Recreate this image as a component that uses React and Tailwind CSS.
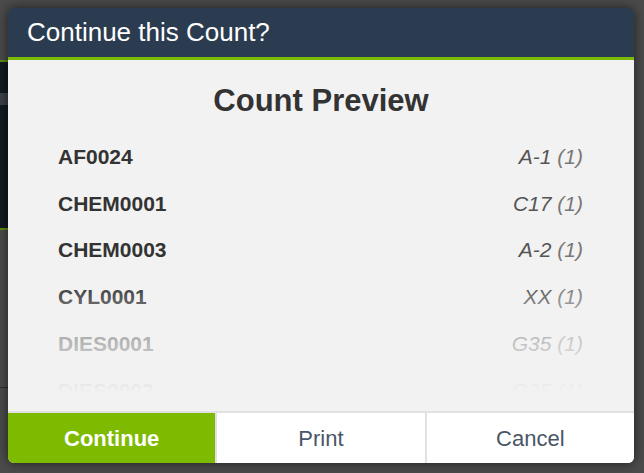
const rows = [
  { sku: 'AF0024', loc: 'A-1', qty: 1 },
  { sku: 'CHEM0001', loc: 'C17', qty: 1 },
  { sku: 'CHEM0003', loc: 'A-2', qty: 1 },
  { sku: 'CYL0001', loc: 'XX', qty: 1 },
  { sku: 'DIES0001', loc: 'G35', qty: 1 },
  { sku: 'DIES0002', loc: 'G35', qty: 1 },
];

export default function App() {
  return (
    <div className="relative h-[473px] w-[644px] overflow-hidden bg-[#4b4b4b] font-['Liberation_Sans',Arial,sans-serif]">
      {/* page behind the overlay */}
      <div className="mt-[60px] flex h-[170px] w-[300px] flex-col border-y-2 border-[#5f8f12] bg-[#121a23]">
        <div className="mt-[31px] h-[12px] bg-[#3c4249]" />
      </div>
      <div className="mt-[157px] h-px w-[300px] bg-[#2e2e2e]" />

      <div className="absolute left-[8px] top-[8px] flex h-[455px] w-[626px] flex-col overflow-hidden rounded-[6px] shadow-[0_0_12px_rgba(0,0,0,0.6)]">
        <div className="flex h-[52px] items-center border-b-[3px] border-[#7cba0a] bg-[#2c3c50] pl-[19px] text-[26px] text-white">
          Continue this Count?
        </div>

        <div className="flex flex-1 flex-col bg-[#f2f2f2] pt-[23px]">
          <h2 className="h-[36px] text-center text-[31px] font-bold leading-[36px] text-[#333]">Count Preview</h2>
          <div className="relative mt-[14.5px] h-[259px] overflow-hidden">
            {rows.map((r) => (
              <div key={r.sku} className="flex h-[46.7px] items-center justify-between pl-[50px] pr-[51px] text-[21px]">
                <span className="font-bold text-[#333]">{r.sku}</span>
                <span className="italic text-[#555]">
                  {r.loc} <span className="text-[#777]">({r.qty})</span>
                </span>
              </div>
            ))}
            <div className="absolute inset-x-0 bottom-0 h-[112px] bg-linear-to-b from-[#f2f2f2]/0 via-[#f2f2f2]/65 to-[#f2f2f2]" />
          </div>
        </div>

        <div className="grid h-[52px] grid-cols-3 gap-[2px] border-t-2 border-[#e1e1e1] bg-[#e1e1e1] text-[22px]">
          <button className="bg-[#7dba00] font-bold text-white">Continue</button>
          <button className="bg-white text-[#4a5566]">Print</button>
          <button className="bg-white text-[#4a5566]">Cancel</button>
        </div>
      </div>
    </div>
  );
}
